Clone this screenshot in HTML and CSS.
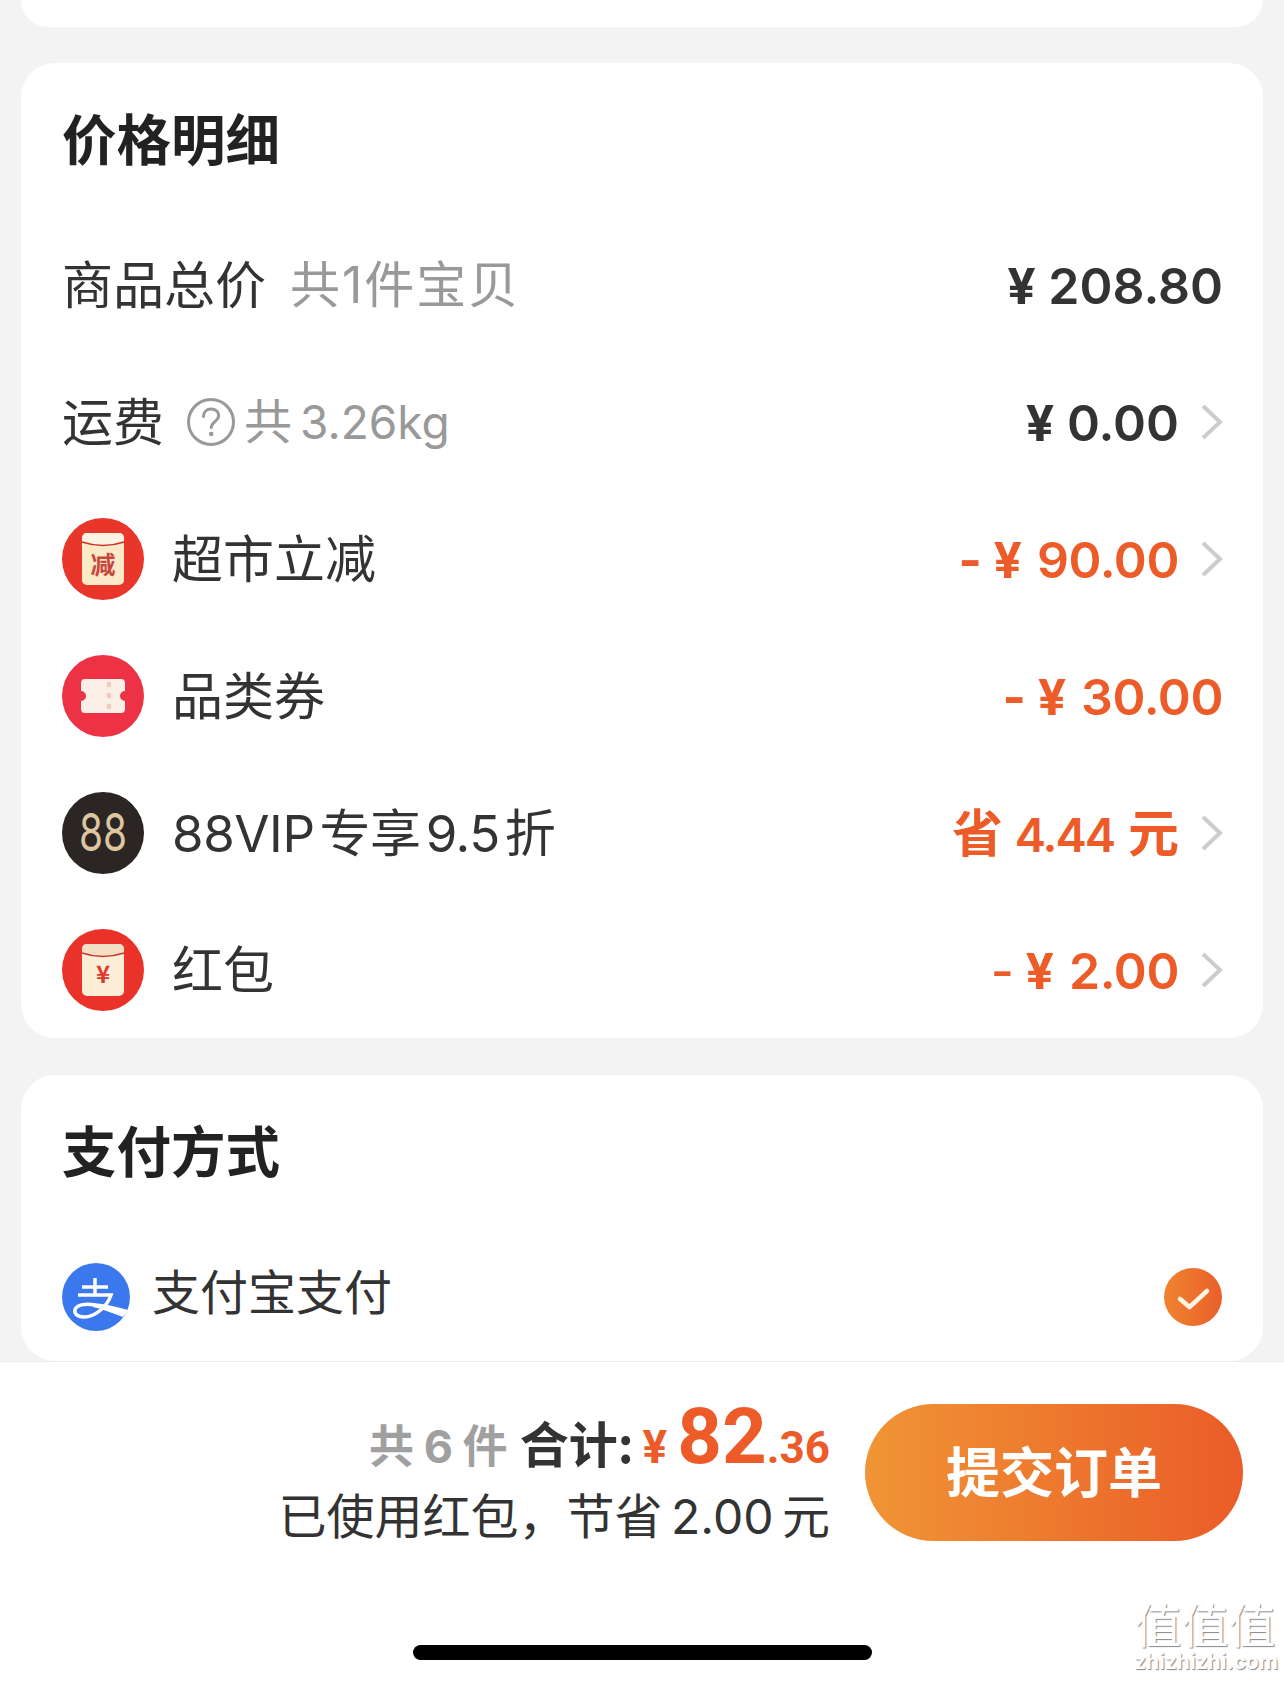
FILE: index.html
```html
<!DOCTYPE html>
<html lang="zh-CN">
<head>
    <meta charset="UTF-8">
    <meta name="viewport" content="width=device-width, initial-scale=1">
    <title>确认订单</title>
    <link rel="stylesheet" href="styles.css">
</head>
<body>
<div class="side">
    <div class="kort kort-topp"></div>

    <div class="kort kort-pris">
        <h2 class="tittel">价格明细</h2>

        <div class="rad">
            <span class="navn">商品总价</span>
            <span class="notat notat-stor">共1件宝贝</span>
            <span class="belop belop-mork"><i class="yen">¥</i> 208.80</span>
        </div>

        <div class="rad">
            <span class="navn">运费</span>
            <svg class="hjelp" viewBox="0 0 50 50">
                <circle cx="25" cy="25" r="22.5" fill="none" stroke="#999" stroke-width="3"/>
                <path d="M17.5 19.5c0-4.500 3.300-7.500 7.700-7.500 4.300 0 7.500 2.800 7.500 6.600 0 5.900-7.500 6-7.500 12" fill="none" stroke="#999" stroke-width="3" stroke-linecap="round"/>
                <circle cx="25.200" cy="37" r="2.300" fill="#999"/>
            </svg>
            <span class="notat"><i class="notat-tegn">共</i>3.26kg</span>
            <span class="belop belop-mork"><i class="yen">¥</i> 0.00</span>
            <svg class="pil" viewBox="0 0 22 36"><path d="M2 2l17 16L2 34" fill="none" stroke="#ccc" stroke-width="4"/></svg>
        </div>

        <div class="rad">
            <svg class="ikon" viewBox="0 0 82 82">
                <circle cx="41" cy="41" r="41" fill="#e8362a"/>
                <rect x="20" y="15" width="42" height="52" rx="5" fill="#fbe9c8"/>
                <path d="M20 20a5 5 0 0 1 5-5h32a5 5 0 0 1 5 5v4q-21 7-42 0z" fill="#fdf3e3"/>
                <path d="M20 24q21 7 42 0" fill="none" stroke="#c9352b" stroke-width="1.500"/>
                <text class="ikon-tekst" x="41" y="56" text-anchor="middle" font-size="25" fill="#c9463c">减</text>
            </svg>
            <span class="navn navn-ikon">超市立减</span>
            <span class="belop belop-rod"><i class="minus">-</i> <i class="yen">¥</i> 90.00</span>
            <svg class="pil" viewBox="0 0 22 36"><path d="M2 2l17 16L2 34" fill="none" stroke="#ccc" stroke-width="4"/></svg>
        </div>

        <div class="rad">
            <svg class="ikon" viewBox="0 0 82 82">
                <circle cx="41" cy="41" r="41" fill="#ec3244"/>
                <path d="M23 24h36a4 4 0 0 1 4 4v8a5 5 0 0 0 0 10v8a4 4 0 0 1-4 4H23a4 4 0 0 1-4-4v-8a5 5 0 0 0 0-10v-8a4 4 0 0 1 4-4z" fill="#fbeee6"/>
                <path d="M47 27v30" fill="none" stroke="#eec9bd" stroke-width="4" stroke-dasharray="5 6"/>
            </svg>
            <span class="navn navn-ikon">品类券</span>
            <span class="belop belop-rod"><i class="minus">-</i> <i class="yen">¥</i> 30.00</span>
        </div>

        <div class="rad">
            <svg class="ikon" viewBox="0 0 82 82">
                <circle cx="41" cy="41" r="41" fill="#2b2623"/>
                <text class="ikon-tall" x="17" y="59" font-size="52" textLength="48" lengthAdjust="spacingAndGlyphs" fill="#dcc5a0">88</text>
            </svg>
            <span class="navn navn-ikon navn-vip">88VIP 专享 9.5 折</span>
            <span class="belop belop-rod belop-spar"><i class="spar-tegn">省</i> 4.44 <i class="spar-tegn">元</i></span>
            <svg class="pil" viewBox="0 0 22 36"><path d="M2 2l17 16L2 34" fill="none" stroke="#ccc" stroke-width="4"/></svg>
        </div>

        <div class="rad">
            <svg class="ikon" viewBox="0 0 82 82">
                <circle cx="41" cy="41" r="41" fill="#e8322a"/>
                <rect x="20" y="15" width="42" height="52" rx="5" fill="#fbeed6"/>
                <path d="M20 20a5 5 0 0 1 5-5h32a5 5 0 0 1 5 5v4q-21 7-42 0z" fill="#f5dfc4"/>
                <path d="M20 24q21 7 42 0" fill="none" stroke="#c9352b" stroke-width="1.500"/>
                <text class="ikon-tekst" x="41" y="54" text-anchor="middle" font-size="24" fill="#dd3a2e">¥</text>
            </svg>
            <span class="navn navn-ikon">红包</span>
            <span class="belop belop-rod"><i class="minus minus-tynn">-</i> <i class="yen">¥</i> 2.00</span>
            <svg class="pil" viewBox="0 0 22 36"><path d="M2 2l17 16L2 34" fill="none" stroke="#ccc" stroke-width="4"/></svg>
        </div>
    </div>

    <div class="kort kort-betal">
        <h2 class="tittel">支付方式</h2>
        <div class="betal-rad">
            <svg class="alipay" viewBox="0 0 68 68">
                <circle cx="34" cy="34" r="34" fill="#3b78ee"/>
                <path d="M20 24h26M33 15v17M16 32h33C45 44 33 54 22 54c-6 0-10-3-9-7 1-5 10-7 20-5" fill="none" stroke="#fff" stroke-width="3.500"/>
                <path d="M31 40c12 1 24 4 35 7l-5 7C50 50 40 46 31 44z" fill="#fff"/>
            </svg>
            <span class="betal-navn">支付宝支付</span>
            <svg class="hake" viewBox="0 0 58 58">
                <defs>
                    <linearGradient id="hakeFarge" x1="0" y1="0" x2="1" y2="0">
                        <stop offset="0" stop-color="#f0842f"/>
                        <stop offset="1" stop-color="#e95f2b"/>
                    </linearGradient>
                </defs>
                <circle cx="29" cy="29" r="29" fill="url(#hakeFarge)"/>
                <path d="M16 31l9.500 8L43 23" fill="none" stroke="#fff3e6" stroke-width="4.500" stroke-linecap="round" stroke-linejoin="round"/>
            </svg>
        </div>
    </div>

    <div class="bunn">
        <div class="bunn-rad">
            <div class="sum">
                <div class="sum-topp">
                    <span class="sum-antall">共 6 件</span>
                    <span class="sum-tekst">合计:</span>
                    <span class="sum-pris"><i class="sum-yen">¥</i><b class="sum-stor">82</b><b class="sum-liten">.36</b></span>
                </div>
                <div class="sum-spar">已使用红包&#65292;节省 2.00 元</div>
            </div>
            <button class="send">提交订单</button>
        </div>
        <div class="hjemlinje"></div>
    </div>

    <div class="vannmerke">
        <div class="vannmerke-tegn">值值值</div>
        <div class="vannmerke-url">zhizhizhi.com</div>
    </div>
</div>
</body>
</html>
```

FILE: styles.css
```css
html, body {
    margin: 0;
    padding: 0;
}
body {
    background-color: #f3f3f3;
    font-family: "Inter", "Noto Sans CJK SC", sans-serif;
    color: #333;
}
i {
    font-style: normal;
}
.side {
    width: 1284px;
    height: 1684px;
    overflow: hidden;
    position: relative;
    display: flex;
    flex-direction: column;
}
.kort {
    background-color: #fff;
    margin: 0 21px;
    border-radius: 34px;
    box-sizing: border-box;
    flex-shrink: 0;
}
.kort-topp {
    height: 27px;
    border-radius: 0 0 34px 34px;
}
.kort-pris {
    margin-top: 36px;
    height: 975px;
    padding: 0 40px 0 41px;
}
.kort-betal {
    margin-top: 37px;
    height: 286px;
    padding: 0 40px 0 41px;
}
.tittel {
    margin: 0;
    height: 153px;
    line-height: 147px;
    font-size: 54.5px;
    font-weight: 700;
    font-family: "Noto Sans CJK SC", sans-serif;
    color: #222;
}
.rad {
    height: 137px;
    display: flex;
    align-items: center;
}
.navn {
    font-family: "Inter", "Noto Sans CJK SC", sans-serif;
    font-size: 51px;
    padding-bottom: 6px;
    color: #333;
}
.navn-ikon {
    padding-left: 28px;
}
.navn-vip {
    word-spacing: -9px;
    letter-spacing: -0.4px;
}
.notat {
    color: #999;
    font-size: 46px;
    margin-left: 8px;
    padding-bottom: 7px;
}
.notat-stor {
    font-size: 50px;
    margin-left: 24px;
    letter-spacing: 2px;
}
.notat-tegn {
    font-size: 48px;
    margin-right: 8px;
}
.hjelp {
    width: 50px;
    height: 50px;
    margin-left: 22px;
}
.ikon {
    width: 82px;
    height: 82px;
    flex-shrink: 0;
}
.ikon-tekst {
    font-family: "Noto Sans CJK SC", sans-serif;
    font-weight: 700;
}
.ikon-tall {
    font-family: "Inter", sans-serif;
    font-weight: 400;
}
.belop {
    margin-left: auto;
    font-weight: 600;
    font-size: 50px;
    padding-top: 2px;
    white-space: pre;
}
.belop-mork {
    color: #333;
}
.belop-rod {
    color: #ec5b28;
    letter-spacing: -0.4px;
}
.belop-spar {
    font-size: 47px;
    letter-spacing: -2px;
    word-spacing: 4px;
    padding-top: 0;
    padding-bottom: 6px;
    margin-right: 2px;
}
.spar-tegn {
    font-size: 51px;
}
.minus {
    font-weight: 700;
}
.minus-tynn {
    font-weight: 500;
}
.yen {
    font-weight: 700;
    margin-right: 3px;
}
.belop-mork .yen {
    margin-right: 0;
}
.pil {
    width: 22px;
    height: 36px;
    margin-left: 22px;
    flex-shrink: 0;
}
.betal-rad {
    display: flex;
    align-items: center;
    height: 74px;
    margin-top: 32px;
}
.alipay {
    width: 68px;
    height: 68px;
    flex-shrink: 0;
}
.betal-navn {
    font-family: "Noto Sans CJK SC", sans-serif;
    font-size: 48px;
    color: #333;
    margin-left: 22px;
    padding-bottom: 16px;
}
.hake {
    width: 58px;
    height: 58px;
    margin-left: auto;
    margin-right: 1px;
}
.bunn {
    flex: 1;
    background-color: #fff;
    border-top: 1px solid #ececec;
    display: flex;
    flex-direction: column;
}
.bunn-rad {
    display: flex;
    justify-content: flex-end;
    align-items: flex-start;
    margin-top: 42px;
    padding-right: 41px;
}
.sum {
    text-align: right;
    margin-right: 35px;
}
.sum-topp {
    height: 66px;
    line-height: 66px;
    display: flex;
    justify-content: flex-end;
    align-items: baseline;
    white-space: pre;
}
.sum-antall {
    color: #a0a0a0;
    font-size: 45px;
    font-weight: 700;
    margin-right: 12px;
    word-spacing: -1px;
}
.sum-tekst {
    color: #333;
    font-size: 49px;
    font-weight: 700;
    font-family: "Noto Sans CJK SC", sans-serif;
    margin-right: 9px;
}
.sum-pris {
    color: #ec5b28;
    font-family: "Roboto", sans-serif;
}
.sum-yen {
    font-size: 46px;
    font-weight: 700;
    margin-right: 10px;
}
.sum-stor {
    font-size: 78px;
    font-weight: 700;
}
.sum-liten {
    font-size: 44px;
    font-weight: 700;
}
.sum-spar {
    font-family: "Inter", "Noto Sans CJK SC", sans-serif;
    font-size: 48px;
    line-height: 60px;
    word-spacing: -5px;
    color: #333;
    margin-top: 17px;
}
.send {
    width: 378px;
    height: 137px;
    border: none;
    border-radius: 69px;
    background: linear-gradient(90deg, #f09535, #ea5c28);
    color: #fff;
    font-family: "Noto Sans CJK SC", sans-serif;
    font-size: 54px;
    font-weight: 700;
    padding-bottom: 8px;
}
.hjemlinje {
    width: 459px;
    height: 15px;
    border-radius: 8px;
    background-color: #000;
    margin: 98px auto 0;
}
.vannmerke {
    position: absolute;
    right: 8px;
    bottom: 8px;
    width: 142px;
    text-align: center;
    color: #fff;
    text-shadow: 1px 1px 1px #888;
}
.vannmerke-tegn {
    font-family: "Noto Sans CJK SC", sans-serif;
    font-size: 47px;
    line-height: 50px;
}
.vannmerke-url {
    font-size: 21px;
    font-weight: 700;
    line-height: 28px;
}
```
